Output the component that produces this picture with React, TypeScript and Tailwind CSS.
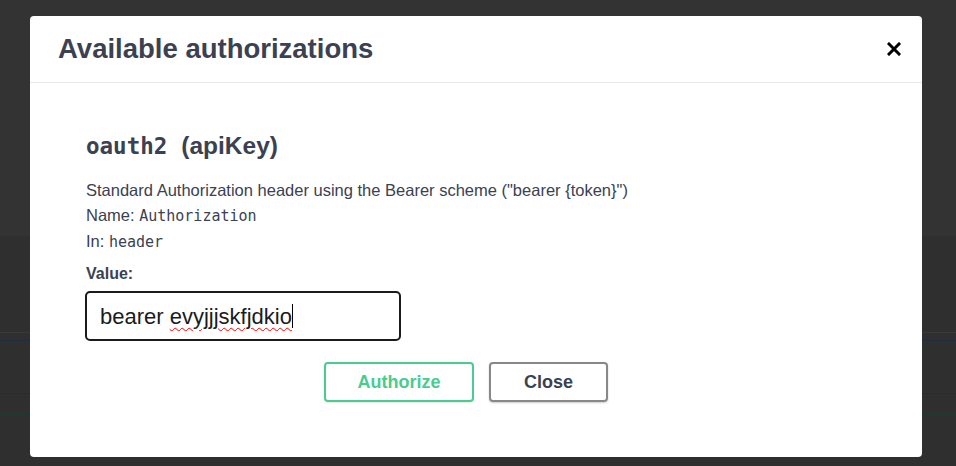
import React from "react";

export default function App() {
  return (
    <div className="relative w-[956px] h-[466px] overflow-hidden bg-[#2f2f2f]" style={{ fontFamily: '"Liberation Sans", Arial, sans-serif' }}>
      {/* dimmed page underneath */}
      <div className="flex flex-col">
        <div className="h-[236px] bg-[#333333]" />
        <div className="h-[96px]" />
        <div className="h-px bg-[#3a3a3a]" />
        <div className="h-[7px]" />
        <div className="h-px bg-[#1f2d42]" />
        <div className="h-[52px]" />
        <div className="h-px bg-[#1f2d42]" />
        <div className="h-[20px]" />
        <div className="h-px bg-[#1d3b2e]" />
      </div>

      {/* modal */}
      <div className="absolute left-[30px] top-[16px] w-[892px] h-[441px] bg-white rounded-[4px] flex flex-col">
        <div className="h-[67px] border-b border-[#e8e8e8] flex items-center justify-between pl-[28px] pr-[21px]">
          <h3 className="text-[27.5px] font-bold text-[#3b4151] leading-none">Available authorizations</h3>
          <svg width="14" height="14" viewBox="0 0 14 14">
            <path d="M2 2 L12 12 M12 2 L2 12" stroke="#000" strokeWidth="3" strokeLinecap="square" />
          </svg>
        </div>
        <div className="flex flex-col pl-[56px] pt-[51px]">
          <h4 className="text-[24.5px] font-bold text-[#3b4151] leading-none flex items-baseline">
            <span style={{ fontFamily: '"DejaVu Sans Mono", monospace' }} className="text-[22.5px]">oauth2</span>
            <span className="ml-[14px]">(apiKey)</span>
          </h4>
          <div className="mt-[19px] text-[16.5px] text-[#3b4151] leading-[25.5px]">
            <p>Standard Authorization header using the Bearer scheme ("bearer {"{token}"}")</p>
            <p>
              Name: <code style={{ fontFamily: '"DejaVu Sans Mono", monospace' }} className="text-[15px] leading-none">Authorization</code>
            </p>
            <p>
              In: <code style={{ fontFamily: '"DejaVu Sans Mono", monospace' }} className="text-[15px] leading-none">header</code>
            </p>
          </div>
          <label className="mt-[10px] text-[16px] font-bold text-[#3b4151] leading-[20px]">Value:</label>
          <div className="mt-[7px] ml-[-1px] w-[316px] h-[50px] border-2 border-[#1b1b1b] rounded-[5px] flex items-center pl-[13px] text-[22px] text-[#1b1b1b]">
            <span>bearer&nbsp;</span>
            <span className="underline decoration-wavy decoration-[#ff0000] decoration-1 underline-offset-[3px]">evyjjjskfjdkio</span>
            <span className="w-px h-[24px] bg-black" />
          </div>
          <div className="mt-[21px] flex justify-center gap-[15px] pr-[76px]">
            <button className="w-[150px] h-[40px] border-2 border-[#49cc90] rounded-[4px] text-[18px] font-bold text-[#49cc90] shadow-[0_1px_2px_rgba(0,0,0,0.1)]">Authorize</button>
            <button className="w-[119px] h-[40px] border-2 border-[#888888] rounded-[4px] text-[18px] font-bold text-[#3b4151] shadow-[0_1px_2px_rgba(0,0,0,0.2)]">Close</button>
          </div>
        </div>
      </div>
    </div>
  );
}
